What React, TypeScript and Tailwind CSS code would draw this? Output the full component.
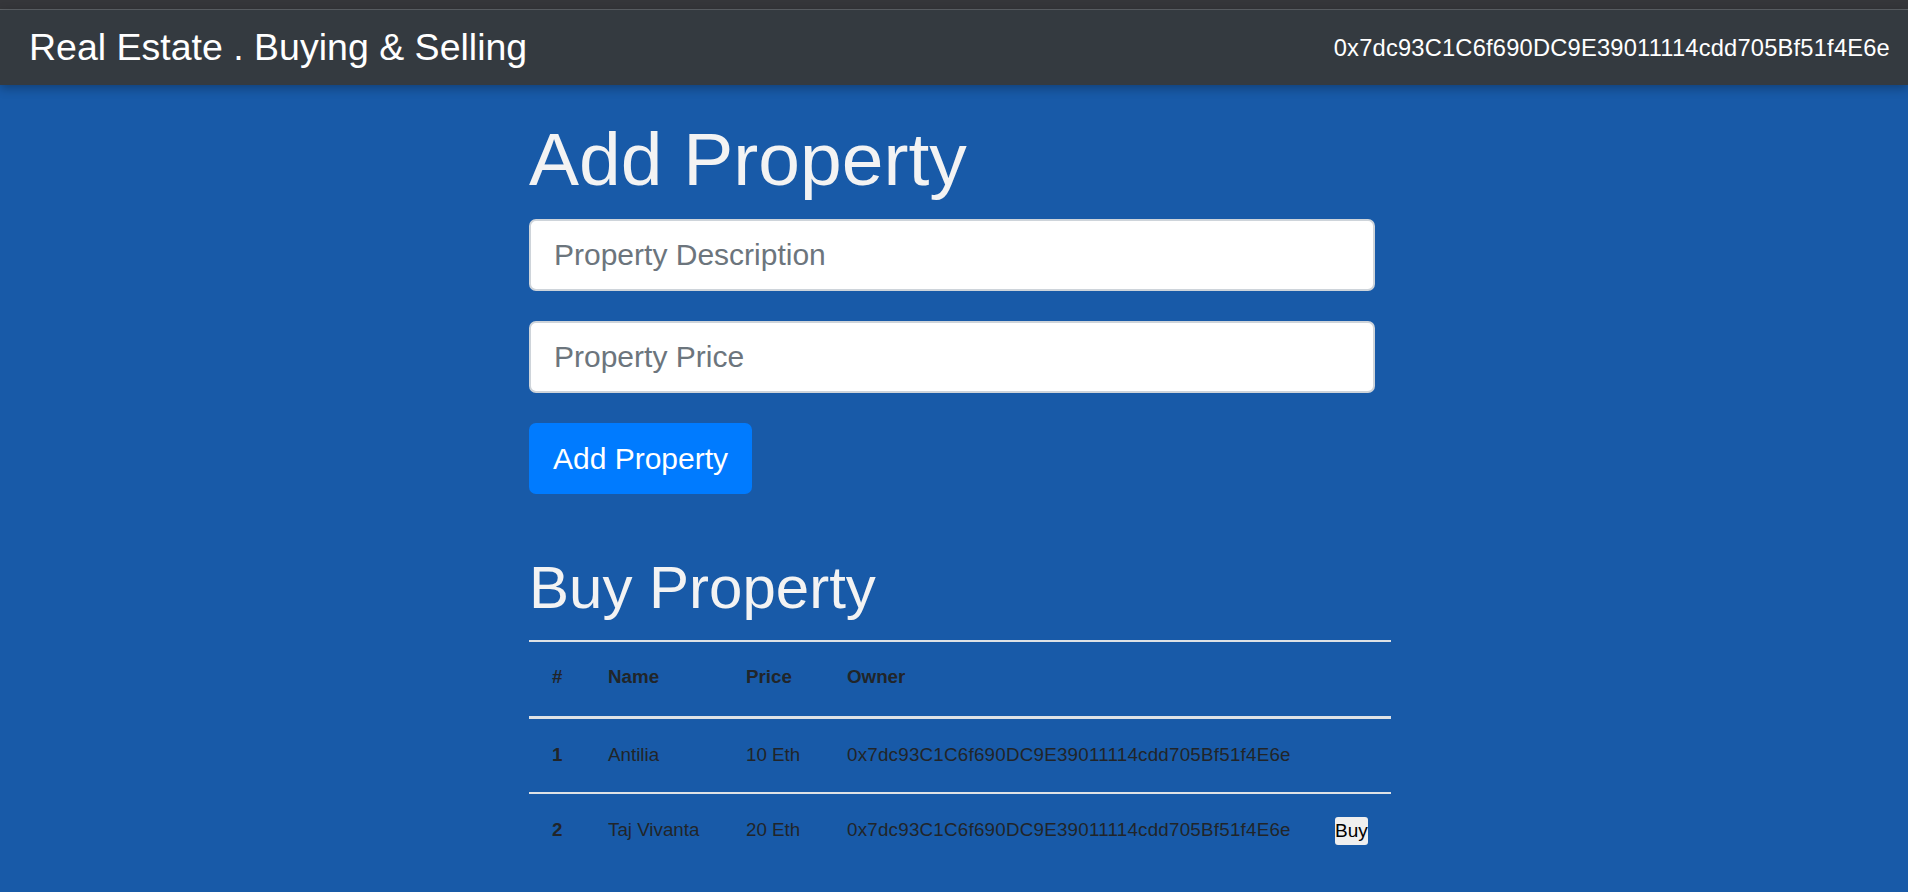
import React from "react";

const ADDR = "0x7dc93C1C6f690DC9E39011114cdd705Bf51f4E6e";

const rows = [
  { id: 1, name: "Antilia", price: "10 Eth", owner: ADDR, buy: false },
  { id: 2, name: "Taj Vivanta", price: "20 Eth", owner: ADDR, buy: true },
];

export default function App() {
  return (
    <div className="min-h-screen bg-[#185aa8] font-['Liberation_Sans',Arial,sans-serif]">
      <div className="h-[9px] bg-[#35363a]" />
      <div className="h-px bg-[#5f6368]" />
      <nav className="relative z-10 flex h-[75px] items-center justify-between bg-[#343a40] pl-[29px] pr-[18px] shadow-[0_3px_10px_rgba(0,0,0,0.3)]">
        <span className="text-[37.5px] leading-normal text-white">Real Estate . Buying &amp; Selling</span>
        <span className="pt-[2px] text-[23.7px] leading-normal tracking-[0.2px] text-white">{ADDR}</span>
      </nav>

      <main className="ml-[529px] w-[862px] pt-[29px] pb-[24px]">
        <h1 className="mb-[15px] text-[75px] leading-[90px] text-[#f3f3f3]">Add Property</h1>
        <div className="w-[846px]">
          <input
            className="mb-[30px] block h-[72px] w-full rounded-[7px] border-2 border-[#ced4da] bg-white px-[23px] text-[30px] text-[#495057] outline-none placeholder:text-[#6c757d]"
            placeholder="Property Description"
          />
          <input
            className="mb-[30px] block h-[72px] w-full rounded-[7px] border-2 border-[#ced4da] bg-white px-[23px] text-[30px] text-[#495057] outline-none placeholder:text-[#6c757d]"
            placeholder="Property Price"
          />
          <button className="block h-[71px] w-[223px] rounded-[7px] bg-[#007bff] text-center text-[30px] text-white">
            Add Property
          </button>
        </div>

        <h2 className="mt-[58px] mb-[16px] text-[60px] leading-[72px] text-[#f3f3f3]">Buy Property</h2>
        <table className="w-[862px] table-fixed border-collapse text-[18.75px] text-[#212529]">
          <thead>
            <tr className="h-[76px] border-t-2 border-b-[3px] border-[#dee2e6]">
              <th className="w-[57px] pb-[3px] pl-[23px] text-left font-bold">#</th>
              <th className="w-[138px] pb-[3px] pl-[22px] text-left font-bold">Name</th>
              <th className="w-[100px] pb-[3px] pl-[22px] text-left font-bold">Price</th>
              <th className="w-[488px] pb-[3px] pl-[23px] text-left font-bold">Owner</th>
              <th className="w-[79px]" />
            </tr>
          </thead>
          <tbody>
            {rows.map((r, i) => (
              <tr
                key={r.id}
                className={i === 0 ? "h-[76px] border-b-2 border-[#dee2e6]" : "h-[74px]"}
              >
                <td className="pl-[23px] font-bold">{r.id}</td>
                <td className="pl-[22px]">{r.name}</td>
                <td className="pl-[22px]">{r.price}</td>
                <td className="pl-[23px] whitespace-nowrap tracking-[0.24px]">{r.owner}</td>
                <td className="pl-[23px]">
                  {r.buy && (
                    <button className="block h-[28px] w-[33px] overflow-hidden whitespace-nowrap rounded-[3px] bg-[#efefef] text-left text-[19px] leading-[28px] text-black">
                      Buy
                    </button>
                  )}
                </td>
              </tr>
            ))}
          </tbody>
        </table>
      </main>
    </div>
  );
}
